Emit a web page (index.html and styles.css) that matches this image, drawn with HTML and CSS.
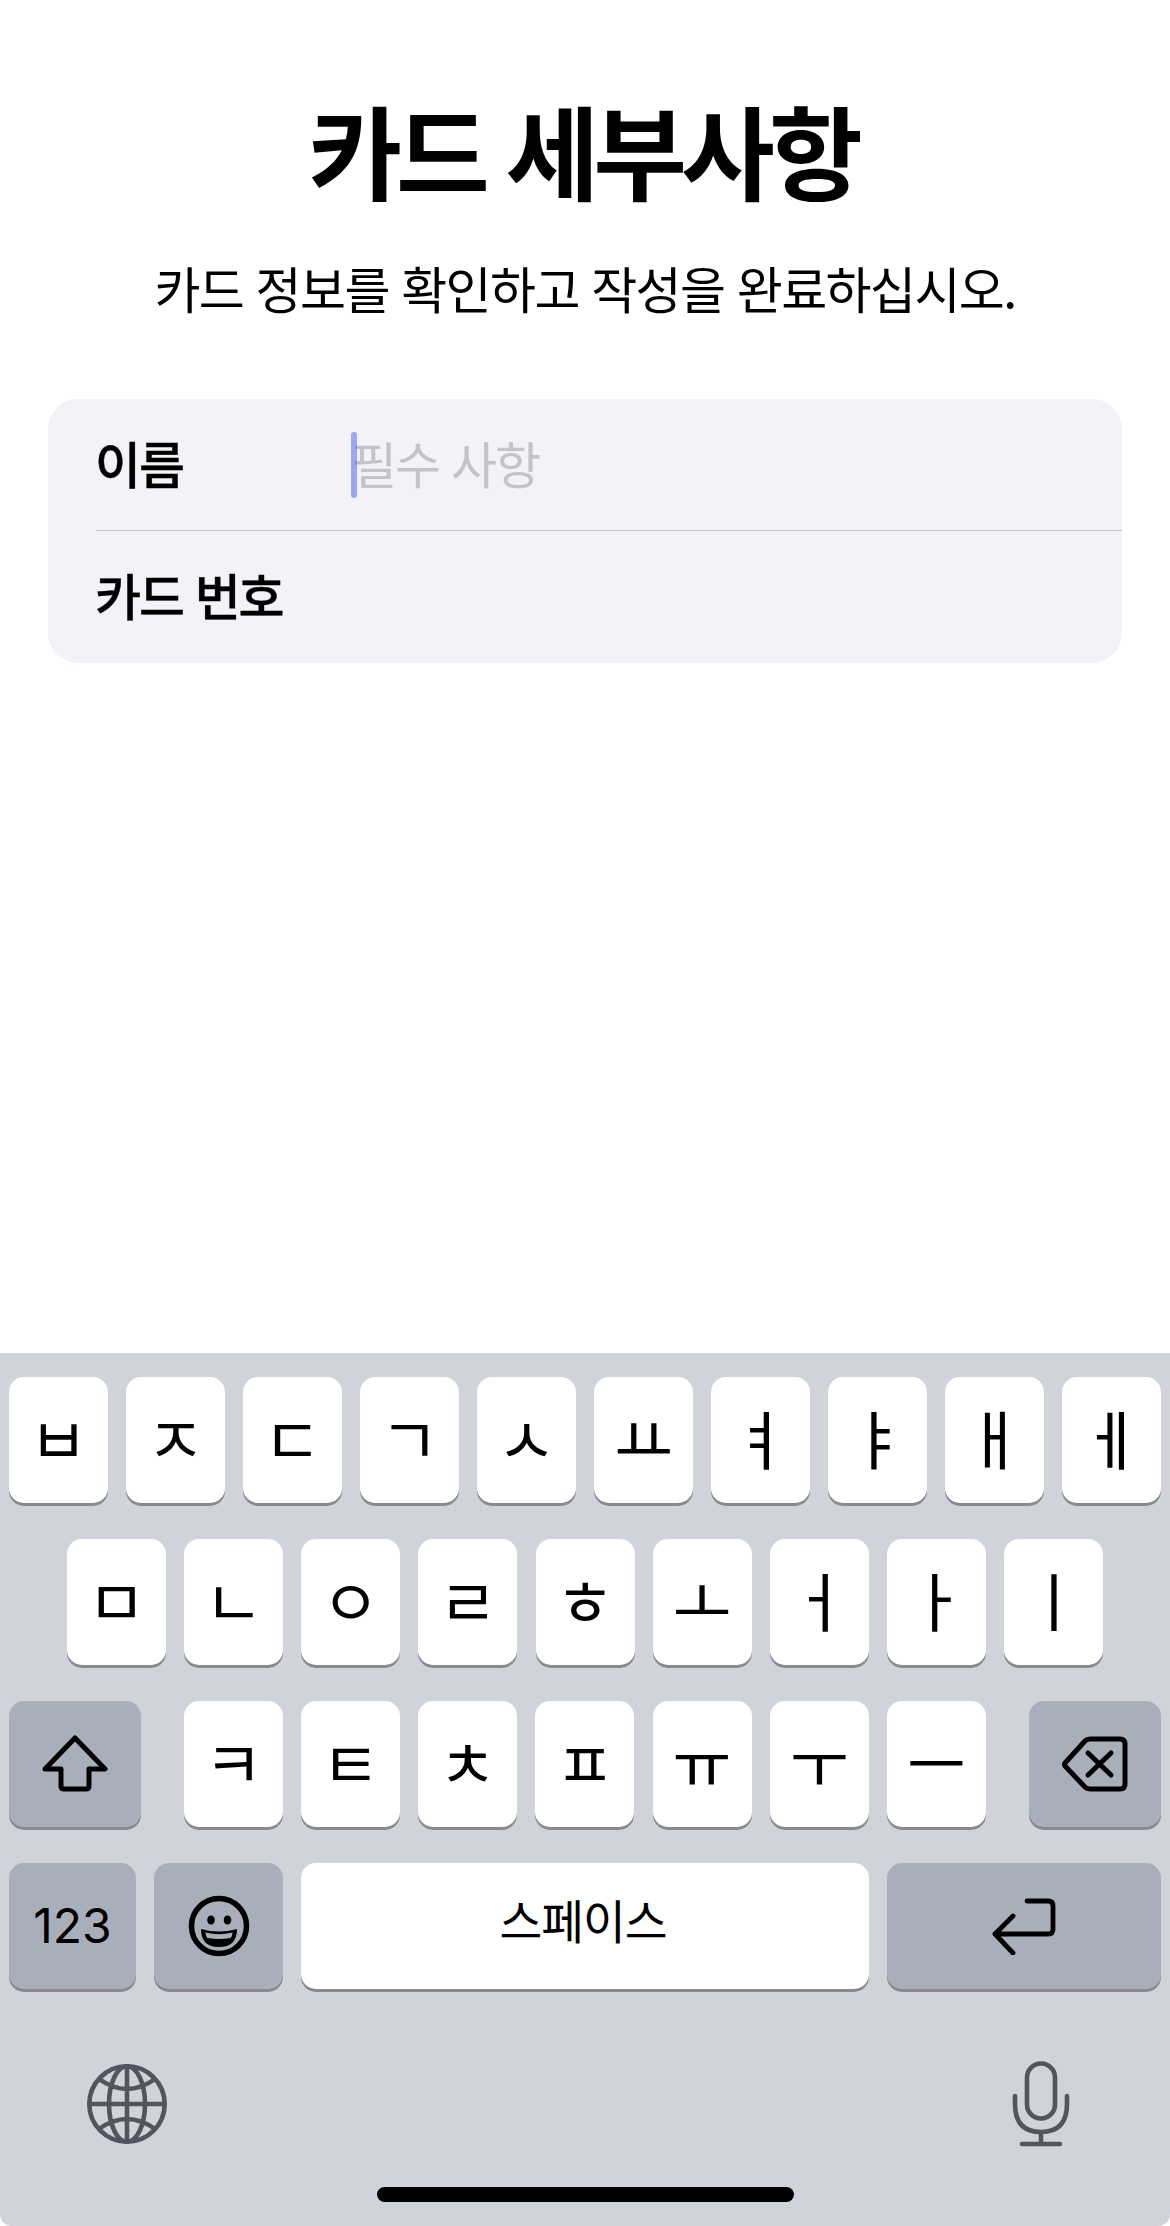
FILE: index.html
```html
<!DOCTYPE html>
<html lang="ko">
<head>
<meta charset="utf-8">
<title>카드 세부사항</title>
<link rel="stylesheet" href="styles.css">
</head>
<body>
<div class="screen">
  <main class="content">
    <h1 class="title">카드 세부사항</h1>
    <p class="subtitle">카드 정보를 확인하고 작성을 완료하십시오.</p>
    <section class="form">
      <div class="row row-first">
        <span class="label">이름</span>
        <span class="field"><span class="placeholder">필수 사항</span><span class="caret"></span></span>
      </div>
      <div class="row">
        <span class="label">카드 번호</span>
      </div>
    </section>
  </main>
  <section class="keyboard">
    <div class="keys">
      <div class="key-row">
        <div class="key">ㅂ</div><div class="key">ㅈ</div><div class="key">ㄷ</div><div class="key">ㄱ</div><div class="key">ㅅ</div><div class="key">ㅛ</div><div class="key">ㅕ</div><div class="key">ㅑ</div><div class="key">ㅐ</div><div class="key">ㅔ</div>
      </div>
      <div class="key-row row-home">
        <div class="key">ㅁ</div><div class="key">ㄴ</div><div class="key">ㅇ</div><div class="key">ㄹ</div><div class="key">ㅎ</div><div class="key">ㅗ</div><div class="key">ㅓ</div><div class="key">ㅏ</div><div class="key">ㅣ</div>
      </div>
      <div class="key-row row-split">
        <div class="key key-fn key-shift">
          <svg class="icon-shift" viewBox="0 0 66 58" fill="none" stroke="#000" stroke-width="5" stroke-linejoin="round"><path d="M33 3 L63 34 H47 V51 Q47 54 44 54 H22 Q19 54 19 51 V34 H3 Z"/></svg>
        </div>
        <div class="letters">
          <div class="key">ㅋ</div><div class="key">ㅌ</div><div class="key">ㅊ</div><div class="key">ㅍ</div><div class="key">ㅠ</div><div class="key">ㅜ</div><div class="key">ㅡ</div>
        </div>
        <div class="key key-fn key-shift key-back">
          <svg class="icon-back" viewBox="0 0 68 58" fill="none" stroke="#000" stroke-width="5" stroke-linejoin="round" stroke-linecap="round"><path d="M4 28 Q3 29 4 31 L24 52 Q26 54 30 54 H59 Q64 54 64 49 V9 Q64 4 59 4 H30 Q26 4 24 6 Z"/><path d="M27 18 L50 40 M50 18 L27 40"/></svg>
        </div>
      </div>
      <div class="key-row">
        <div class="key key-fn key-num">123</div>
        <div class="key key-fn key-emoji">
          <svg class="icon-emoji" viewBox="0 0 62 62"><circle cx="31" cy="31" r="27.5" fill="none" stroke="#000" stroke-width="5.5"/><ellipse cx="23" cy="25" rx="3.8" ry="4.5"/><ellipse cx="39.5" cy="25" rx="3.8" ry="4.5"/><path d="M13 34 Q31 39 49 34 Q49 52 31 52 Q13 52 13 34 Z"/><path d="M17.5 37.5 Q31 41 44.5 37.5 Q44 42 42.5 43 Q31 45 19.5 43 Q18 42 17.5 37.5 Z" fill="#a9afba"/></svg>
        </div>
        <div class="key key-space">스페이스</div>
        <div class="key key-fn key-return">
          <svg class="icon-return" viewBox="0 0 66 58" fill="none" stroke="#000" stroke-width="4.8" stroke-linecap="round" stroke-linejoin="round"><path d="M36 4 H57 Q62 4 62 9 V32 Q62 37 57 37 H4"/><path d="M22 19 L4 37 L22 56"/></svg>
        </div>
      </div>
    </div>
    <div class="tools">
      <svg class="icon-globe" viewBox="0 0 82 82" fill="none" stroke="#50555f" stroke-width="4.6"><circle cx="41" cy="41" r="37.7"/><ellipse cx="41" cy="41" rx="18" ry="37.7"/><path d="M41 3.3 V78.7 M3.3 41 H78.7 M13 16 Q41 36 69 16 M13 66 Q41 46 69 66"/></svg>
      <svg class="icon-mic" viewBox="0 0 58 86" fill="none" stroke="#50555f" stroke-width="4.6" stroke-linecap="round"><rect x="15" y="2.5" width="28" height="55" rx="14"/><path d="M3 35 V43 Q3 71 29 71 Q55 71 55 43 V35 M29 71 V83 M10 83 H48"/></svg>
    </div>
    <div class="home-bar"></div>
  </section>
</div>
</body>
</html>
```
FILE: styles.css
```css
* { box-sizing: border-box; }
html, body { margin: 0; padding: 0; background: #fff; }
.screen {
  width: 1170px;
  height: 2226px;
  display: flex;
  flex-direction: column;
  font-family: "Noto Sans CJK KR", "Noto Sans", sans-serif;
  color: #000;
  overflow: hidden;
}
.content { flex: 1; padding: 89px 48px 0; }
.title {
  margin: 0;
  height: 120px;
  padding-right: 5px;
  font-size: 102px;
  line-height: 120px;
  font-weight: 700;
  text-align: center;
  letter-spacing: -6px;
  word-spacing: -1px;
}
.subtitle {
  margin: 50px 0 0;
  height: 56px;
  font-size: 50px;
  line-height: 56px;
  text-align: center;
  letter-spacing: -1.6px;
}
.form {
  margin-top: 84px;
  height: 264px;
  background: #f2f2f7;
  border-radius: 30px;
  padding-left: 48px;
}
.row { height: 132px; display: flex; align-items: center; padding-bottom: 6px; }
.row-first { border-bottom: 1px solid #c6c6c8; }
.label {
  width: 256px;
  margin-left: -1px;
  font-size: 50px;
  font-weight: 500;
  letter-spacing: -2.1px;
  -webkit-text-stroke: 0.4px #000;
  white-space: nowrap;
}
.field { position: relative; display: flex; align-items: center; }
.caret {
  position: absolute;
  left: 0;
  top: 50%;
  width: 6px;
  height: 66px;
  margin-top: -30px;
  border-radius: 3px;
  background: rgba(59, 96, 243, 0.5);
}
.placeholder { font-size: 50px; color: #c4c4c8; letter-spacing: -2px; }
.keyboard {
  height: 873px;
  background: #d1d3da;
  border-radius: 0 0 12px 12px;
  padding-top: 24px;
  position: relative;
}
.keys { display: flex; flex-direction: column; gap: 36px; padding: 0 9px; }
.key-row { display: flex; justify-content: center; gap: 18px; }
.row-home { justify-content: flex-start; margin-left: 58px; gap: 18.15px; }
.row-split { justify-content: flex-start; gap: 0; }
.letters { display: flex; gap: 18.15px; margin-left: 43px; }
.key {
  width: 99px;
  height: 126px;
  background: #fff;
  border-radius: 15px;
  box-shadow: 0 3px 0 #898a8d;
  display: flex;
  align-items: center;
  justify-content: center;
  font-size: 64px;
  line-height: 1;
  padding-bottom: 8px;
}
.key-fn { background: #a9afba; padding-bottom: 0; }
.key-shift { width: 132px; }
.key-back { margin-left: auto; }
.key-num { width: 127px; font-family: "Inter", sans-serif; font-size: 48px; font-weight: 380; }
.key-emoji { width: 129px; }
.key-space { flex: 1; font-size: 46.5px; letter-spacing: -1px; padding: 0 4px 14px 0; }
.key-return { width: 274px; }
.icon-shift { width: 66px; height: 58px; }
.icon-back { width: 68px; height: 58px; }
.icon-emoji { width: 62px; height: 62px; }
.icon-return { width: 66px; height: 58px; }
.tools { display: flex; justify-content: space-between; align-items: center; padding: 72px 100px 0 86px; }
.icon-globe { width: 82px; height: 82px; }
.icon-mic { width: 58px; height: 86px; }
.home-bar {
  position: absolute;
  left: 377px;
  bottom: 24px;
  width: 417px;
  height: 15px;
  border-radius: 8px;
  background: #000;
}
```
